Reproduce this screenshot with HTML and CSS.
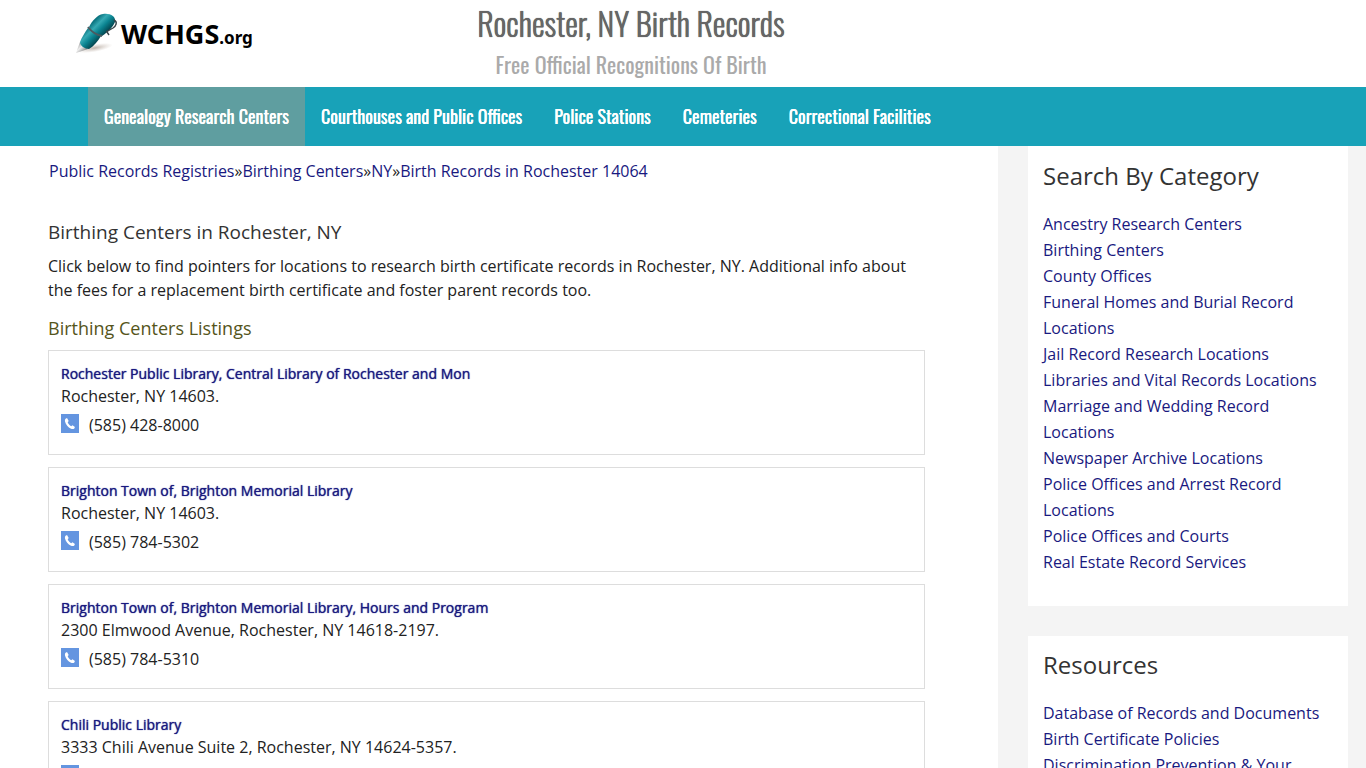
FILE: index.html
```html
<!DOCTYPE html>
<html lang="en">
<head>
<meta charset="utf-8">
<meta name="viewport" content="width=device-width, initial-scale=1">
<title>Rochester, NY Birth Records</title>
<link rel="stylesheet" href="styles.css">
</head>
<body>
<svg class="sprite" aria-hidden="true">
  <symbol id="phone" viewBox="0 0 18 19">
    <rect width="18" height="19" fill="#6495e0"/>
    <path d="M4.6 4.7 6 4.1 7.7 7 6.7 8.2C7.3 9.9 8.6 11.3 10.2 12.2L11.5 11.3 13.9 13.1 13.3 14.5C12.6 15.2 11.3 15.3 10 14.7 7 13.3 4.8 10.7 4 7.4 3.8 6.3 4 5.3 4.6 4.7Z" fill="#fff"/>
  </symbol>
</svg>
<header class="header">
  <a class="logo" href="#" aria-label="WCHGS.org">
    <svg class="logo-pen" viewBox="0 0 43 43" aria-hidden="true">
      <defs>
        <linearGradient id="barrel" gradientUnits="userSpaceOnUse" x1="16" y1="11" x2="28" y2="23">
          <stop offset="0" stop-color="#0b7480"/><stop offset=".3" stop-color="#35a9b3"/><stop offset=".6" stop-color="#0a8390"/><stop offset="1" stop-color="#04454f"/>
        </linearGradient>
        <linearGradient id="tip" x1="0" y1="0" x2="1" y2="1">
          <stop offset="0" stop-color="#777"/><stop offset=".45" stop-color="#eee"/><stop offset="1" stop-color="#444"/>
        </linearGradient>
        <radialGradient id="shade"><stop offset="0" stop-color="#a99b90" stop-opacity=".75"/><stop offset="1" stop-color="#c9bdb4" stop-opacity="0"/></radialGradient>
      </defs>
      <ellipse cx="19" cy="36" rx="18" ry="4" fill="url(#shade)" transform="rotate(-10 19 36)"/>
      <path d="M0 41 4 30 12 37Z" fill="url(#tip)"/>
      <path d="M4 30C6 25 9 20 12 16L25 24C22 29 18 34 13 37 9 37 4 34 4 30Z" fill="url(#barrel)"/>
      <path d="M13 15C16 9 21 3 27 2 34 1 40 4 39 10 37 15 32 20 26 24 20 23 15 19 13 15Z" fill="url(#barrel)"/>
      <path d="M12 15C15 19 20 23 26 24" fill="none" stroke="#4a5a60" stroke-width="2"/>
      <path d="M38 8C42 10 40 14 37 16L30 20M31 20 33 23" fill="none" stroke="#39444a" stroke-width="1.4"/>
    </svg>
    <span class="logo-name">WCHGS<span class="logo-suffix">.org</span></span>
  </a>
  <div class="heading">
    <h1 class="title">Rochester, NY Birth Records</h1>
    <p class="subtitle">Free Official Recognitions Of Birth</p>
  </div>
</header>
<nav class="nav">
  <a class="nav-link active" href="#">Genealogy Research Centers</a>
  <a class="nav-link" href="#">Courthouses and Public Offices</a>
  <a class="nav-link" href="#">Police Stations</a>
  <a class="nav-link" href="#">Cemeteries</a>
  <a class="nav-link" href="#">Correctional Facilities</a>
</nav>
<div class="layout">
  <main class="main">
    <div class="crumbs"><a href="#">Public Records Registries</a>»<a href="#">Birthing Centers</a>»<a href="#">NY</a>»<a href="#">Birth Records in Rochester 14064</a></div>
    <h2 class="section-title">Birthing Centers in Rochester, NY</h2>
    <p class="intro">Click below to find pointers for locations to research birth certificate records in Rochester, NY. Additional info about the fees for a replacement birth certificate and foster parent records too.</p>
    <h3 class="list-title">Birthing Centers Listings</h3>
    <div class="listings">
      <article class="card">
        <a class="card-name" href="#">Rochester Public Library, Central Library of Rochester and Mon</a>
        <div class="address">Rochester, NY 14603.</div>
        <div class="phone"><svg class="phone-icon" aria-hidden="true"><use href="#phone"/></svg>(585) 428-8000</div>
      </article>
      <article class="card">
        <a class="card-name" href="#">Brighton Town of, Brighton Memorial Library</a>
        <div class="address">Rochester, NY 14603.</div>
        <div class="phone"><svg class="phone-icon" aria-hidden="true"><use href="#phone"/></svg>(585) 784-5302</div>
      </article>
      <article class="card">
        <a class="card-name" href="#">Brighton Town of, Brighton Memorial Library, Hours and Program</a>
        <div class="address">2300 Elmwood Avenue, Rochester, NY 14618-2197.</div>
        <div class="phone"><svg class="phone-icon" aria-hidden="true"><use href="#phone"/></svg>(585) 784-5310</div>
      </article>
      <article class="card">
        <a class="card-name" href="#">Chili Public Library</a>
        <div class="address">3333 Chili Avenue Suite 2, Rochester, NY 14624-5357.</div>
        <div class="phone"><svg class="phone-icon" aria-hidden="true"><use href="#phone"/></svg></div>
      </article>
    </div>
  </main>
  <aside class="sidebar">
    <section class="panel">
      <h2 class="panel-title">Search By Category</h2>
      <ul class="links">
        <li><a href="#">Ancestry Research Centers</a></li>
        <li><a href="#">Birthing Centers</a></li>
        <li><a href="#">County Offices</a></li>
        <li><a href="#">Funeral Homes and Burial Record Locations</a></li>
        <li><a href="#">Jail Record Research Locations</a></li>
        <li><a href="#">Libraries and Vital Records Locations</a></li>
        <li><a href="#">Marriage and Wedding Record Locations</a></li>
        <li><a href="#">Newspaper Archive Locations</a></li>
        <li><a href="#">Police Offices and Arrest Record Locations</a></li>
        <li><a href="#">Police Offices and Courts</a></li>
        <li><a href="#">Real Estate Record Services</a></li>
      </ul>
    </section>
    <section class="panel">
      <h2 class="panel-title">Resources</h2>
      <ul class="links">
        <li><a href="#">Database of Records and Documents</a></li>
        <li><a href="#">Birth Certificate Policies</a></li>
        <li><a href="#">Discrimination Prevention &amp; Your</a></li>
      </ul>
    </section>
  </aside>
</div>
</body>
</html>
```
FILE: styles.css
```css
* { box-sizing: border-box; }
body {
  margin: 0;
  height: 100vh;
  overflow: hidden;
  background: #fff;
  color: #222;
  font: 400 16px/24px "Open Sans", sans-serif;
}
h1, h2, h3, p, ul { margin: 0; padding: 0; font-weight: 400; }
a { color: #191980; text-decoration: none; }
.main a:hover, .links a:hover { text-decoration: underline; }
.sprite { display: none; }

.header {
  display: grid;
  grid-template-columns: 1fr 2fr 1fr;
  align-items: start;
  padding-right: 104px;
}
.logo {
  display: flex;
  align-items: flex-start;
  padding: 12px 0 0 76px;
  color: #000;
}
.logo-pen { width: 43px; height: 43px; flex: none; }
.logo-name {
  margin-left: 2px;
  padding-top: 6px;
  font: 700 27px/32px "Noto Sans", sans-serif;
}
.logo-suffix { font-size: 17px; }
.heading {
  text-align: center;
  font-family: Oswald, "Roboto Condensed", "DejaVu Sans Condensed", sans-serif;
}
.title {
  padding-top: 3px;
  color: #666;
  font-size: 32px;
  font-weight: 300;
  line-height: 40px;
  text-shadow: 0 0 0 #666, 0 0 1px #666;
}
.subtitle { padding: 5px 0 7px; color: #aaa; font-size: 22px; line-height: 32px; }

.nav {
  display: flex;
  padding-left: 88px;
  background: #18a2b8;
}
.nav-link {
  padding: 0 16px;
  color: #fff;
  font: 400 18px/59px Oswald, "Roboto Condensed", "DejaVu Sans Condensed", sans-serif;
  text-shadow: 0 0 0 #fff;
}
.nav-link.active { background: #5f9ea0; }

.layout {
  display: grid;
  grid-template-columns: minmax(0, 1fr) 320px;
  gap: 30px;
  padding-right: 18px;
  background: #f4f4f4;
}
.main { padding: 13px 73px 0 48px; background: #fff; }
.crumbs { padding-left: 1px; }
.section-title { margin-top: 36px; color: #333; font-size: 19px; line-height: 26px; }
.intro { margin-top: 9px; }
.list-title { margin: 13px 0 9px; color: #55551b; font-size: 18px; line-height: 26px; }
.listings { display: grid; gap: 12px; }
.card { min-height: 105px; padding: 12px; border: 1px solid #ddd; }
.card-name {
  display: block;
  font-size: 14px;
  line-height: 22px;
  text-shadow: 0 0 1px #191980;
}
.address { line-height: 22px; }
.phone { display: flex; gap: 10px; padding-top: 7px; line-height: 22px; }
.phone-icon { width: 18px; height: 19px; flex: none; }

.panel { margin-bottom: 30px; padding: 11px 15px 31px; background: #fff; }
.panel:first-child { padding-top: 12px; }
.panel-title { margin-bottom: 17px; color: #333; font-size: 24px; line-height: 36px; }
.links { list-style: none; line-height: 26px; }
```
